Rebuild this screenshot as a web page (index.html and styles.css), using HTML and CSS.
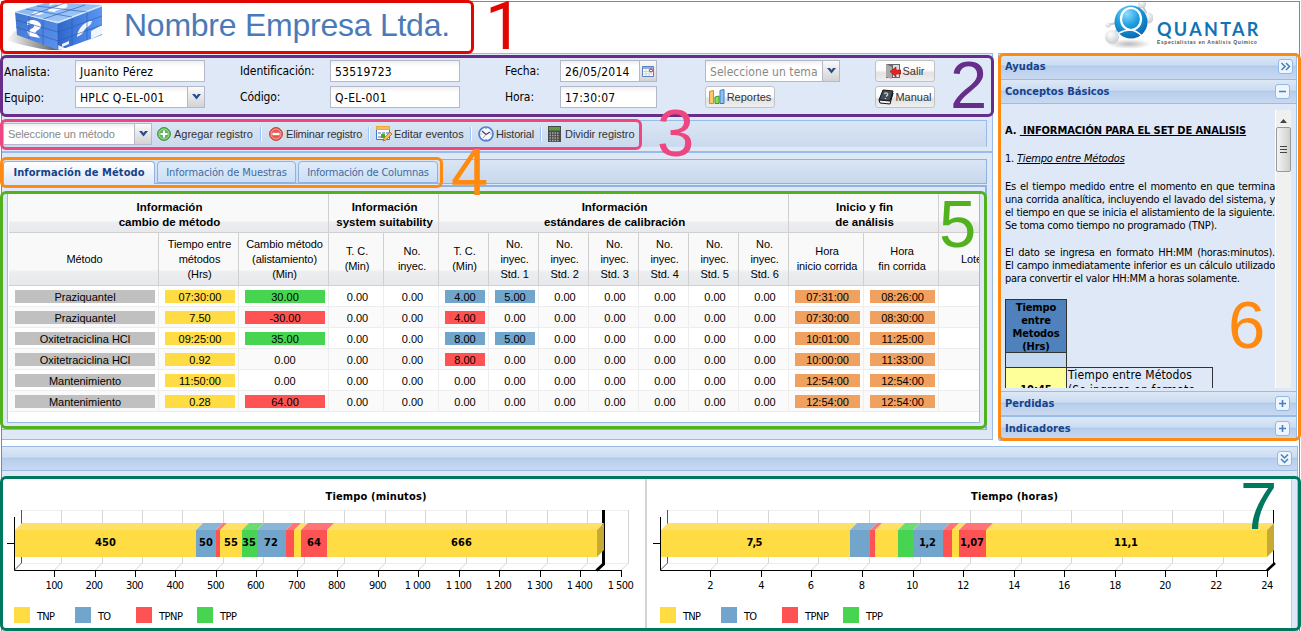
FILE: index.html
```html
<!DOCTYPE html>
<html lang="es">
<head>
<meta charset="utf-8">
<title>Quantar</title>
<link rel="stylesheet" href="styles.css">
</head>
<body>
<div class="app">
  <header class="header">
    <svg class="cube" width="98" height="50" viewBox="0 0 98 50">
      <defs>
        <linearGradient id="top" x1="0" y1="0" x2="1" y2="1"><stop offset="0" stop-color="#7fb2ee"/><stop offset="1" stop-color="#a9cdf8"/></linearGradient>
        <linearGradient id="lf" x1="0" y1="0" x2="1" y2="1"><stop offset="0" stop-color="#3f74cf"/><stop offset="1" stop-color="#5a92ec"/></linearGradient>
        <linearGradient id="rt" x1="0" y1="0" x2="1" y2="0"><stop offset="0" stop-color="#2f66cc"/><stop offset="1" stop-color="#5c97f2"/></linearGradient>
        <linearGradient id="sh" x1="0" y1="0" x2="1" y2="0"><stop offset="0" stop-color="#fff"/><stop offset="1" stop-color="#555"/></linearGradient>
      </defs>
      <path d="M0 38l9-9 45 18v1H44C28 46 12 42 0 38z" fill="url(#sh)"/>
      <path d="M9 10L42 0l54 3-44 17z" fill="url(#top)"/>
      <path d="M9 10l43 11v27L11 33z" fill="url(#lf)"/>
      <path d="M52 21L96 4v29L54 48h-2z" fill="url(#rt)"/>
      <path d="M44 1c12-2 20 1 17 4-3 3-11 2-12 5l-7-1c0-4 10-3 11-6-3-2-8 0-10 1zM30 9l9 2-6 2-8-1z" fill="#fff" opacity=".9"/>
      <path d="M21 20c3-4 14-2 14 4 0 4-6 4-6 8l-6-2c0-4 6-3 5-7-2-1-4-1-7 0zM21 29l9 2 4 5-11-2z" fill="#fff"/>
      <path d="M71 35c0-9 10-17 15-16-1 6-7 6-8 10-1 3-5 5-7 6zM85 29l11-6v9l-11 5zM56 42l7-3v3l-7 3zM52 43l9 4-9 1z" fill="#fff" opacity=".92"/>
      <path d="M10 18l42 12 44-16M10 25l42 14 44-16M23 14v23M37 18v25M66 16v28M81 10v28M20 7l46 8M31 4l50 6M23 14L59 1M37 17l42-14M52 21v27" fill="none" stroke="#2b5bb2" stroke-width=".9" opacity=".7"/>
      <path d="M9 10l43 11 44-17" fill="none" stroke="#c8e2ff"/>
    </svg>
    <h1 class="company">Nombre Empresa Ltda.</h1>
    <div class="brand">
      <svg width="60" height="50" viewBox="0 0 60 50">
        <defs>
          <radialGradient id="ball" cx=".38" cy=".25" r=".8"><stop offset="0" stop-color="#8fdcff"/><stop offset=".45" stop-color="#1d9ee0"/><stop offset="1" stop-color="#0664ad"/></radialGradient>
          <radialGradient id="grey" cx=".4" cy=".3" r=".8"><stop offset="0" stop-color="#fff"/><stop offset="1" stop-color="#c3c6ca"/></radialGradient>
          <radialGradient id="shade"><stop offset="0" stop-color="#bbb"/><stop offset="1" stop-color="#fff"/></radialGradient>
        </defs>
        <ellipse cx="36" cy="42" rx="22" ry="5" fill="url(#shade)"/>
        <path d="M18 35l14-16M15 23l16-4 18-16 7 13-16 6" fill="none" stroke="#c6c8ca" stroke-width="2"/>
        <circle cx="19" cy="35" r="7" fill="url(#grey)"/><circle cx="15" cy="23" r="2.500" fill="url(#grey)"/>
        <circle cx="49" cy="2" r="4" fill="url(#grey)"/><circle cx="55" cy="16" r="5.500" fill="url(#grey)"/>
        <circle cx="38" cy="20" r="16.500" fill="url(#ball)"/>
        <ellipse cx="38" cy="17" rx="10" ry="11" fill="none" stroke="#fff" stroke-width="2.200"/>
        <path d="M26 31c8-4 15-5 23 3" fill="none" stroke="#fff" stroke-width="1.500"/>
      </svg>
      <div class="brand-words"><b>QUANTAR</b><span>Especialistas en Análisis Químico</span></div>
    </div>
  </header>

  <div class="middle">
    <div class="left">
      <section class="panel form-panel">
        <div class="form">
          <label>Analista:</label><div class="input">Juanito Pérez</div>
          <label class="up">Identificación:</label><div class="input">53519723</div>
          <label class="up">Fecha:</label>
          <div class="input date"><span>26/05/2014</span><i class="trig"><svg width="13" height="13" viewBox="0 0 13 13"><path d="M.5 1.500h11v10H.5z" fill="#fff" stroke="#5b83bd"/><path d="M1 2h10v2H1z" fill="#8fb0dc"/><path d="M1 6.500h10M1 9h10M4 4v7M7 4v7" stroke="#cdd3da"/><circle cx="9" cy="5.500" r="1.500" fill="#fff" stroke="#a02020"/></svg></i></div>
          <div class="input theme hint"><span>Seleccione un tema</span><i class="trig"><svg width="9" height="6" viewBox="0 0 9 6"><path d="M0 0h3l1.500 2L6 0h3L4.500 5.500z" fill="#2a4d8a"/></svg></i></div>
          <button class="btn"><svg width="16" height="16" viewBox="0 0 16 16"><path d="M1 1h14v14H1z" fill="#666"/><path d="M1 1l6 3v12l-6-2z" fill="#aaa"/><path d="M8 2h6v12H8z" fill="#ddd"/><path d="M5 8.500L11 4v3h5v4h-5v3z" fill="#e02525" stroke="#a80f0f" stroke-width=".6"/></svg>Salir</button>

          <label>Equipo:</label><div class="input"><span>HPLC Q-EL-001</span><i class="trig"><svg width="9" height="6" viewBox="0 0 9 6"><path d="M0 0h3l1.500 2L6 0h3L4.500 5.500z" fill="#2a4d8a"/></svg></i></div>
          <label class="up">Código:</label><div class="input">Q-EL-001</div>
          <label class="up">Hora:</label><div class="input date">17:30:07</div>
          <button class="btn wide"><svg width="16" height="16" viewBox="0 0 16 16"><path d="M.5 2.500l4-1v13h-4z" fill="#ffc66b" stroke="#d58a25"/><path d="M6 8l4-1v7.500H6z" fill="#8be05f" stroke="#3c9a28"/><path d="M11 1.500l4-1v14h-4z" fill="#8ec2f2" stroke="#3a7ac4"/></svg>Reportes</button>
          <button class="btn"><svg width="16" height="16" viewBox="0 0 16 16"><path d="M5 1l10 1-3 10-11-1z" fill="#3d4c60" stroke="#111"/><path d="M1 11l1 3 10 1 3-11-3 8z" fill="#f4f4f4" stroke="#111"/><path d="M6.500 5c1-2 4-1 3 1L8 7.500M7.500 9v1" fill="none" stroke="#e6d29a" stroke-width="1.300"/></svg>Manual</button>
        </div>
        <div class="toolbar">
          <div class="input method hint"><span>Seleccione un método</span><i class="trig"><svg width="9" height="6" viewBox="0 0 9 6"><path d="M0 0h3l1.500 2L6 0h3L4.500 5.500z" fill="#2a4d8a"/></svg></i></div>
          <div class="tool t1"><svg width="14" height="14" viewBox="0 0 14 14"><circle cx="7" cy="7" r="6.400" fill="#5fb55a" stroke="#3b8a3b"/><circle cx="7" cy="7" r="5" fill="none" stroke="#a5d89f"/><path d="M7 3.500v7M3.500 7h7" stroke="#fff" stroke-width="2"/></svg>Agregar registro</div><i class="sep"></i>
          <div class="tool t2"><svg width="14" height="14" viewBox="0 0 14 14"><circle cx="7" cy="7" r="6.400" fill="#e8584f" stroke="#bb3a35"/><circle cx="7" cy="7" r="5" fill="none" stroke="#f5a49c"/><path d="M3.500 7h7" stroke="#fff" stroke-width="2.400"/></svg>Eliminar registro</div><i class="sep"></i>
          <div class="tool t3"><svg width="16" height="16" viewBox="0 0 16 16"><path d="M.5.500h13v13H.5z" fill="#fff" stroke="#4178c4"/><path d="M0 0h14v4H0z" fill="#f5a534"/><path d="M1 2h12" stroke="#fbd693"/><path d="M2 6h3v2H2zM6 6h3v2H6zM10 6h3v2h-3zM2 10h3v2H2z" fill="#9ab5d8"/><path d="M5 8h4v4H5z" fill="#51a51f"/><path d="M7 15l1-3 6-6 2 2-6 6z" fill="#f6bd66" stroke="#ab6b25" stroke-width=".8"/></svg>Editar eventos</div><i class="sep"></i>
          <div class="tool t4"><svg width="16" height="16" viewBox="0 0 16 16"><circle cx="8" cy="8" r="7" fill="#f5f8ff" stroke="#527fd0" stroke-width="1.700"/><path d="M4 5l4 3.500L12 6" fill="none" stroke="#39435a" stroke-width="1.200"/><path d="M8 8.500L5 12" stroke="#e88"/><path d="M8 2v1M8 13v1M2.500 8h1M12.500 8h1" stroke="#777"/></svg>Historial</div><i class="sep"></i>
          <div class="tool t5"><svg width="13" height="16" viewBox="0 0 13 16"><path d="M0 0h13v16H0z" fill="#4a4a4a"/><path d="M1 1h11v3.500H1z" fill="#5f9b43"/><path d="M1.500 7h10M1.500 9.500h10M1.500 12h10M1.500 14.500h10" stroke="#aaa" stroke-width="1.300" stroke-dasharray="1.500 1"/></svg>Dividir registro</div>
        </div>
      </section>

      <section class="panel tab-panel">
        <nav class="tabs"><a class="tab active">Información de Método</a><a class="tab mid">Información de Muestras</a><a class="tab last">Información de Columnas</a></nav>
        <div class="grid-frame"><div class="grid">
          <table>
            <colgroup><col class="c150"><col class="c80"><col class="c90"><col class="c55"><col class="c55"><col class="c50"><col class="c50"><col class="c50"><col class="c50"><col class="c50"><col class="c50"><col class="c50"><col class="c75"><col class="c75"><col class="c70"></colgroup>
            <thead>
              <tr class="groups"><th colspan="3">Información<br>cambio de método</th><th colspan="2">Información<br>system suitability</th><th colspan="7">Información<br>estándares de calibración</th><th colspan="2">Inicio y fin<br>de análisis</th><th></th></tr>
              <tr class="heads"><th>Método</th><th>Tiempo entre<br>métodos<br>(Hrs)</th><th>Cambio método<br>(alistamiento)<br>(Min)</th><th>T. C.<br>(Min)</th><th>No.<br>inyec.</th><th>T. C.<br>(Min)</th><th>No.<br>inyec.<br>Std. 1</th><th>No.<br>inyec.<br>Std. 2</th><th>No.<br>inyec.<br>Std. 3</th><th>No.<br>inyec.<br>Std. 4</th><th>No.<br>inyec.<br>Std. 5</th><th>No.<br>inyec.<br>Std. 6</th><th>Hora<br>inicio corrida</th><th>Hora<br>fin corrida</th><th class="lote">Lote</th></tr>
            </thead>
            <tbody>
              <tr><td><b class="k">Praziquantel</b></td><td><b class="y">07:30:00</b></td><td><b class="g">30.00</b></td><td>0.00</td><td>0.00</td><td><b class="b">4.00</b></td><td><b class="b">5.00</b></td><td>0.00</td><td>0.00</td><td>0.00</td><td>0.00</td><td>0.00</td><td><b class="o">07:31:00</b></td><td><b class="o">08:26:00</b></td><td></td></tr>
              <tr><td><b class="k">Praziquantel</b></td><td><b class="y">7.50</b></td><td><b class="r">-30.00</b></td><td>0.00</td><td>0.00</td><td><b class="r">4.00</b></td><td>0.00</td><td>0.00</td><td>0.00</td><td>0.00</td><td>0.00</td><td>0.00</td><td><b class="o">07:30:00</b></td><td><b class="o">08:30:00</b></td><td></td></tr>
              <tr><td><b class="k">Oxitetraciclina HCl</b></td><td><b class="y">09:25:00</b></td><td><b class="g">35.00</b></td><td>0.00</td><td>0.00</td><td><b class="b">8.00</b></td><td><b class="b">5.00</b></td><td>0.00</td><td>0.00</td><td>0.00</td><td>0.00</td><td>0.00</td><td><b class="o">10:01:00</b></td><td><b class="o">11:25:00</b></td><td></td></tr>
              <tr><td><b class="k">Oxitetraciclina HCl</b></td><td><b class="y">0.92</b></td><td>0.00</td><td>0.00</td><td>0.00</td><td><b class="r">8.00</b></td><td>0.00</td><td>0.00</td><td>0.00</td><td>0.00</td><td>0.00</td><td>0.00</td><td><b class="o">10:00:00</b></td><td><b class="o">11:33:00</b></td><td></td></tr>
              <tr><td><b class="k">Mantenimiento</b></td><td><b class="y">11:50:00</b></td><td>0.00</td><td>0.00</td><td>0.00</td><td>0.00</td><td>0.00</td><td>0.00</td><td>0.00</td><td>0.00</td><td>0.00</td><td>0.00</td><td><b class="o">12:54:00</b></td><td><b class="o">12:54:00</b></td><td></td></tr>
              <tr><td><b class="k">Mantenimiento</b></td><td><b class="y">0.28</b></td><td><b class="r">64.00</b></td><td>0.00</td><td>0.00</td><td>0.00</td><td>0.00</td><td>0.00</td><td>0.00</td><td>0.00</td><td>0.00</td><td>0.00</td><td><b class="o">12:54:00</b></td><td><b class="o">12:54:00</b></td><td></td></tr>
            </tbody>
          </table>
        </div></div>
      </section>
    </div>

    <aside class="help">
      <div class="bar first"><span>Ayudas</span><i class="sq"><svg width="11" height="9" viewBox="0 0 11 9"><path d="M1.500 1L5 4.500 1.500 8M6 1l3.500 3.500L6 8" fill="none" stroke="#4a7dba" stroke-width="1.500"/></svg></i></div>
      <div class="bar"><span>Conceptos Básicos</span><i class="sq"><svg width="9" height="9" viewBox="0 0 9 9"><path d="M1 4.500h7" stroke="#4a7dba" stroke-width="1.500"/></svg></i></div>
      <div class="help-body">
        <div class="doc">
          <p class="dh">A. <u>&nbsp;INFORMACIÓN PARA EL SET DE ANALISIS</u></p>
          <p class="ds">1. <u><em>Tiempo entre Métodos</em></u></p>
          <p class="para"><span class="ln">Es el tiempo medido entre el momento en que termina</span><span class="ln">una corrida analítica, incluyendo el lavado del sistema, y</span><span class="ln">el tiempo en que se inicia el alistamiento de la siguiente.</span><span class="ln end">Se toma como tiempo no programado (TNP).</span></p>
          <p class="para"><span class="ln">El dato se ingresa en formato HH:MM (horas:minutos).</span><span class="ln">El campo inmediatamente inferior es un cálculo utilizado</span><span class="ln end">para convertir el valor HH:MM a horas solamente.</span></p>
          <div class="ex">
            <div class="ex-col"><div class="ex-h">Tiempo<br>entre<br>Metodos<br>(Hrs)</div><div class="ex-s"></div><div class="ex-y">10:45</div></div>
            <div class="ex-note">Tiempo entre Métodos<br>(Se ingresa en formato</div>
          </div>
        </div>
        <div class="scroll"><svg width="15" height="12" viewBox="0 0 15 12"><path d="M4 8l3.500-4L11 8z" fill="#444"/></svg><div class="thumb"><i></i><i></i><i></i></div></div>
      </div>
      <div class="bar low"><span>Perdidas</span><i class="sq"><svg width="9" height="9" viewBox="0 0 9 9"><path d="M1 4.500h7M4.500 1v7" stroke="#4a7dba" stroke-width="1.500"/></svg></i></div>
      <div class="bar low"><span>Indicadores</span><i class="sq"><svg width="9" height="9" viewBox="0 0 9 9"><path d="M1 4.500h7M4.500 1v7" stroke="#4a7dba" stroke-width="1.500"/></svg></i></div>
    </aside>
  </div>

  <section class="south">
    <div class="bar south-bar"><span></span><i class="sq"><svg width="9" height="11" viewBox="0 0 9 11"><path d="M1 1.500L4.500 5 8 1.500M1 6l3.500 3.500L8 6" fill="none" stroke="#4a7dba" stroke-width="1.500"/></svg></i></div>
    <div class="charts">
      <svg class="chart c-min" width="643" height="152" viewBox="2 477 643 152">
        <path d="M21 510.500h607M21 563.500h607M14.500 517l7-7" stroke="#eee" fill="none"/>
        <path d="M61.500 510v53l-7 7M102.500 510v53l-7 7M142.500 510v53l-7 7M182.500 510v53l-7 7M223.500 510v53l-7 7M263.500 510v53l-7 7M304.500 510v53l-7 7M344.500 510v53l-7 7M385.500 510v53l-7 7M425.500 510v53l-7 7M466.500 510v53l-7 7M506.500 510v53l-7 7M547.500 510v53l-7 7M587.500 510v53l-7 7M628.500 510v53l-7 7" stroke="#d6d6d6" fill="none"/>
        <path d="M21.500 510v53l-7 7" stroke="#555" fill="none"/>
        <path d="M603.500 510v54l-7 6.500" stroke="#000" stroke-width="3" fill="none"/>
        <path d="M14.500 517v53.500H622M7 543.500h7M54.500 570v7M95.500 570v7M135.500 570v7M175.500 570v7M216.500 570v7M256.500 570v7M297.500 570v7M337.500 570v7M378.500 570v7M418.500 570v7M459.500 570v7M499.500 570v7M540.500 570v7M580.500 570v7M621.500 570v7" stroke="#000" fill="none"/>
        <g class="y"><path d="M15 530h181v27H15zM220 530h22v27h-22zM294 530h7v27h-7zM327 530h270v27H327z"/><path class="lid" d="M15 530l7-7h181l-7 7zM220 530l7-7h22l-7 7zM294 530l7-7h7l-7 7zM327 530l7-7h270l-7 7z"/></g>
        <g class="b"><path d="M196 530h20v27h-20zM257 530h29v27h-29z"/><path class="lid" d="M196 530l7-7h20l-7 7zM257 530l7-7h29l-7 7z"/></g>
        <g class="r"><path d="M216 530h4v27h-4zM286 530h8v27h-8zM301 530h26v27h-26z"/><path class="lid" d="M216 530l7-7h4l-7 7zM286 530l7-7h8l-7 7zM301 530l7-7h26l-7 7z"/></g>
        <g class="g"><path d="M242 530h15v27h-15z"/><path class="lid" d="M242 530l7-7h15l-7 7z"/></g>
        <path d="M597 530l7-7v27l-7 7z" fill="#c7ab31"/>
        <g class="ct"><text x="376" y="500" textLength="101">Tiempo (minutos)</text><text x="105.500" y="546" textLength="21">450</text><text x="206" y="546" textLength="14">50</text><text x="231" y="546" textLength="14">55</text><text x="249" y="546" textLength="14">35</text><text x="271" y="546" textLength="14">72</text><text x="314" y="546" textLength="14">64</text><text x="461.500" y="546" textLength="21">666</text></g>
        <g class="ax"><text x="54" y="589">100</text><text x="94" y="589">200</text><text x="134.500" y="589">300</text><text x="175" y="589">400</text><text x="215.500" y="589">500</text><text x="255.500" y="589">600</text><text x="296.500" y="589">700</text><text x="336.500" y="589">800</text><text x="377.500" y="589">900</text><text x="417.500" y="589">1 000</text><text x="458.500" y="589">1 100</text><text x="498.500" y="589">1 200</text><text x="539.500" y="589">1 300</text><text x="579.500" y="589">1 400</text><text x="620.500" y="589">1 500</text></g>
        <path class="y" d="M14 607h16v16H14z"/><path class="b" d="M75 607h16v16H75z"/><path class="r" d="M136 607h16v16h-16z"/><path class="g" d="M197 607h16v16h-16z"/>
        <g class="lg"><text x="37" y="620" textLength="18">TNP</text><text x="98" y="620" textLength="13">TO</text><text x="159" y="620" textLength="24">TPNP</text><text x="220" y="620" textLength="17">TPP</text></g>
      </svg>
      <svg class="chart c-hrs" width="644" height="152" viewBox="647 477 644 152">
        <path d="M667 510.500h607M667 563.500h607M660.500 517l7-7" stroke="#eee" fill="none"/>
        <path d="M717.500 510v53l-7 7M768.500 510v53l-7 7M818.500 510v53l-7 7M869.500 510v53l-7 7M920.500 510v53l-7 7M970.500 510v53l-7 7M1021.500 510v53l-7 7M1071.500 510v53l-7 7M1122.500 510v53l-7 7M1172.500 510v53l-7 7M1223.500 510v53l-7 7" stroke="#d6d6d6" fill="none"/>
        <path d="M667.500 510v53l-7 7" stroke="#555" fill="none"/>
        <path d="M1273.500 510v53" stroke="#000"/><path d="M1275 563l-8 7.500" stroke="#000" stroke-width="2.500"/>
        <path d="M660.500 517v53.500H1267M653 543.500h7M710.500 570v7M761.500 570v7M811.500 570v7M862.500 570v7M913.500 570v7M963.500 570v7M1014.500 570v7M1064.500 570v7M1115.500 570v7M1165.500 570v7M1216.500 570v7M1267.500 570v7" stroke="#000" fill="none"/>
        <g class="y"><path d="M661 530h189v27H661zM875 530h23v27h-23zM952 530h7v27h-7zM986 530h281v27H986z"/><path class="lid" d="M661 530l7-7h189l-7 7zM875 530l7-7h23l-7 7zM952 530l7-7h7l-7 7zM986 530l7-7h281l-7 7z"/></g>
        <g class="b"><path d="M850 530h20v27h-20zM913 530h30v27h-30z"/><path class="lid" d="M850 530l7-7h20l-7 7zM913 530l7-7h30l-7 7z"/></g>
        <g class="r"><path d="M870 530h5v27h-5zM943 530h9v27h-9zM959 530h27v27h-27z"/><path class="lid" d="M870 530l7-7h5l-7 7zM943 530l7-7h9l-7 7zM959 530l7-7h27l-7 7z"/></g>
        <g class="g"><path d="M898 530h15v27h-15z"/><path class="lid" d="M898 530l7-7h15l-7 7z"/></g>
        <path d="M1267 530l7-7v27l-7 7z" fill="#c7ab31"/>
        <g class="ct"><text x="1014.500" y="500" textLength="87">Tiempo (horas)</text><text x="754.500" y="546" textLength="16">7,5</text><text x="927.500" y="546" textLength="17">1,2</text><text x="972" y="546" textLength="24">1,07</text><text x="1126" y="546" textLength="24">11,1</text></g>
        <g class="ax"><text x="710" y="589">2</text><text x="761" y="589">4</text><text x="810.500" y="589">6</text><text x="861.500" y="589">8</text><text x="912" y="589">10</text><text x="963" y="589">12</text><text x="1014" y="589">14</text><text x="1064" y="589">16</text><text x="1115" y="589">18</text><text x="1165" y="589">20</text><text x="1216" y="589">22</text><text x="1267" y="589">24</text></g>
        <path class="y" d="M660 607h16v16h-16z"/><path class="b" d="M721 607h16v16h-16z"/><path class="r" d="M782 607h16v16h-16z"/><path class="g" d="M843 607h16v16h-16z"/>
        <g class="lg"><text x="683" y="620" textLength="18">TNP</text><text x="744" y="620" textLength="13">TO</text><text x="805" y="620" textLength="24">TPNP</text><text x="866" y="620" textLength="17">TPP</text></g>
      </svg>
    </div>
  </section>
</div>

<!-- numbered callouts over the screen -->
<div class="call n1"></div><div class="call n2"></div><div class="call n3"></div><div class="call n4"></div><div class="call n5"></div><div class="call n6"></div><div class="call n7"></div>
<div class="num d1">1</div><div class="num d2">2</div><div class="num d3">3</div><div class="num d4">4</div><div class="num d5">5</div><div class="num d6">6</div><div class="num d7">7</div>
</body>
</html>
```
FILE: styles.css
```css
* { box-sizing: border-box; }
body { margin: 0; width: 1301px; height: 631px; overflow: hidden; position: relative; background: #fff; color: #000; font: 11px/13px "DejaVu Sans Condensed", "DejaVu Sans", sans-serif; }
i { font-style: normal; }
.app { margin: 1px 1px 0; height: 630px; border: 1px solid #5b8fd0; border-bottom: 0; display: flex; flex-direction: column; }
.header { height: 51px; display: flex; align-items: flex-start; padding-left: 4px; flex: none; }
.cube { flex: none; }
.company { margin: 5px 0 0 20px; font: 32px/36px "Liberation Sans", Arial, sans-serif; letter-spacing: -.25px; color: #4b7ab8; white-space: nowrap; }
.brand { margin-left: auto; display: flex; width: 206px; }
.brand-words { display: flex; flex-direction: column; color: #1173b5; margin-left: 4px; padding-top: 17px; white-space: nowrap; }
.brand-words b { font: bold 18px/20px Lato, sans-serif; letter-spacing: 2.3px; }
.brand-words span { font: bold 5px/6px "Liberation Sans", sans-serif; letter-spacing: .6px; color: #555; }

.middle { display: flex; gap: 5px; height: 387px; flex: none; }
.left { width: 991px; display: flex; flex-direction: column; }
.panel { border: 1px solid #99bbe8; border-left: 0; background: #dfe8f6; }
.form-panel { height: 99px; border-bottom-color: #99bbe8; padding-right: 5px; }
.form { display: grid; grid-template-columns: 71px 165px 90px 175px 55px 145px 170px 62px; grid-template-rows: 22px 22px; row-gap: 4px; padding: 6px 0 0 2px; height: 66px; font-size: 12px; }
.form label { line-height: 24px; letter-spacing: -.1px; white-space: nowrap; }
.form label.up { line-height: 22px; }
.input { width: 130px; height: 22px; border: 1px solid #b5b8c8; background: linear-gradient(#eee, #fff 5px); padding-left: 4px; line-height: 22px; font-size: 12px; letter-spacing: .25px; display: flex; justify-content: space-between; white-space: nowrap; }
.date { width: 97px; }
.theme { width: 135px; letter-spacing: .05px; }
.hint { color: #888; }
.trig { width: 17px; flex: none; border-left: 1px solid #b5b8c8; background: linear-gradient(#fafafa, #d3d3d6); display: flex; align-items: center; justify-content: center; }
.btn { width: 60px; height: 22px; padding: 0; border: 1px solid #c2c2c2; border-radius: 3px; background: linear-gradient(#fdfdfd 0 45%, #e2e2e2 60%, #efefef); display: flex; align-items: center; justify-content: center; gap: 1px; font: 11px "Liberation Sans", sans-serif; color: #333; white-space: nowrap; }
.btn.wide { width: 70px; gap: 2px; }
.toolbar { height: 27px; border: 1px solid #99bbe8; border-left: 0; border-bottom-color: #cddcf0; background: linear-gradient(#d9e6f4, #cbdaee); display: flex; align-items: center; font: 11px "Liberation Sans", sans-serif; color: #333; }
.method { width: 149px; margin-left: 1px; font-size: 11px; line-height: 20px; letter-spacing: -.1px; }
.tool { display: flex; align-items: center; white-space: nowrap; gap: 3px; letter-spacing: -.05px; }
.t1 { width: 103px; margin-left: 5px; gap: 3px; letter-spacing: 0; }
.sep { width: 2px; height: 14px; border-left: 1px solid #98c8ff; border-right: 1px solid #fff; }
.t2 { width: 99px; margin-left: 7px; letter-spacing: -.2px; }
.t3 { width: 94px; margin-left: 6px; gap: 2px; }
.t4 { width: 62px; margin-left: 6px; gap: 2px; letter-spacing: -.2px; }
.t5 { margin-left: 6px; gap: 4px; }

.tab-panel { height: 288px; padding: 6px 5px 0 0; display: flex; flex-direction: column; }
.tabs { height: 25px; border: 1px solid #8db2e3; border-left: 0; background: linear-gradient(#d9e5f4, #c8d8ec); display: flex; align-items: flex-start; padding: 1px 0 0 1px; flex: none; }
.tab { height: 22px; border: 1px solid #8db2e3; border-radius: 4px 4px 0 0; background: linear-gradient(#dfebfa, #cddff6); color: #416aa3; text-align: center; line-height: 21px; white-space: nowrap; margin-right: 2px; }
.tab.active { width: 152px; height: 23px; border-bottom: 0; background: linear-gradient(#fff, #dfe8f6); color: #15428b; font-weight: bold; letter-spacing: .08px; }
.tab.mid { width: 139px; letter-spacing: -.1px; } .tab.last { width: 140px; letter-spacing: -.22px; }
.grid-frame { border: 2px solid #8db2e3; border-left: 0; border-bottom-width: 1px; margin-top: 1px; height: 245px; padding: 6px 5px 0; background: #dfe8f6; }
.grid { width: 973px; height: 230px; border: 1px solid #99bbe8; background: #fff; overflow: hidden; padding-top: 0; }
table { width: 975px; table-layout: fixed; border-collapse: separate; border-spacing: 0; font: 11px/15px "Liberation Sans", sans-serif; text-align: center; margin-left: 1px; }
.c150 { width: 150px; } .c80 { width: 80px; } .c90 { width: 90px; } .c55 { width: 55px; } .c50 { width: 50px; } .c75 { width: 75px; } .c70 { width: 70px; }
th { padding: 0 0 0 2px; border-right: 1px solid #d0d0d0; border-bottom: 1px solid #d0d0d0; background: linear-gradient(#f9f9f9 0 70%, #ecedef 75%, #e8e9ec); font-weight: normal; white-space: nowrap; letter-spacing: -.08px; }
.groups th { height: 39px; font-weight: bold; padding-top: 3px; font-size: 11.500px; letter-spacing: 0; }
.heads th { height: 53px; }
th.lote { text-align: left; padding-left: 22px; }
td { height: 21px; padding: 4px 3px 0 6px; border-right: 1px solid #ededed; border-bottom: 1px solid #ededed; line-height: 14px; vertical-align: top; }
tbody tr:nth-child(even) td { background: #fafafa; }
td b { display: block; font-weight: normal; line-height: 14px; height: 13px; }
td .k { background: #c0c0c0; } td .y { background: #ffdb44; } td .g { background: #46d451; } td .r { background: #ff5353; } td .b { background: #71a5cc; } td .o { background: #f0a15f; }

.help { width: 299px; border: 1px solid #99bbe8; background: #dfe8f6; display: flex; flex-direction: column; }
.bar { height: 24px; flex: none; border-bottom: 1px solid #99bbe8; background: linear-gradient(#dce8f6, #cbdcf1 45%, #a9c6ea 48%, #b9cfec 55%, #c8d9f1); display: flex; align-items: center; justify-content: space-between; padding: 0 6px; color: #15428b; font-weight: bold; letter-spacing: .05px; }
.bar.first { height: 26px; padding-right: 3px; }
.sq { width: 15px; height: 15px; border: 1px solid #95b8e4; border-radius: 3px; background: #edf5ff; display: flex; align-items: center; justify-content: center; }
.help-body { height: 284px; margin: 0 5px 3px 6px; padding-top: 6px; display: flex; flex: none; overflow: hidden; }
.doc { width: 270px; flex: none; }
.doc p { margin: 0; white-space: nowrap; }
.doc .dh { padding-top: 14px; font-weight: bold; letter-spacing: -.1px; }
.doc .ds { padding: 15px 0; letter-spacing: -.2px; }
.doc .para { letter-spacing: -.25px; padding-bottom: 14px; }
.ln { display: block; text-align: justify; text-align-last: justify; white-space: normal; }
.ln.end { text-align-last: left; }
.ex { display: flex; align-items: flex-end; height: 105px; width: 208px; }
.ex-col { width: 62px; height: 105px; border: 1px solid #333; text-align: center; font-weight: bold; flex: none; }
.ex-h { height: 53px; background: #4f81bd; border-bottom: 1px solid #333; letter-spacing: -.1px; padding-top: 1px; }
.ex-s { height: 15px; background: #c5d9f1; border-bottom: 1px solid #333; }
.ex-y { height: 35px; background: #ffff99; padding-top: 15px; }
.ex-note { height: 37px; width: 146px; border: 1px solid #333; border-left: 0; font-size: 12px; letter-spacing: .15px; white-space: nowrap; overflow: hidden; padding-left: 1px; line-height: 15px; }
.scroll { width: 16px; background: #f0f0f0; border-left: 1px solid #fff; padding-top: 5px; flex: none; }
.scroll svg { display: block; }
.thumb { width: 15px; height: 45px; border: 1px solid #999; border-radius: 2px; background: linear-gradient(90deg, #f4f4f4, #cfcfcf); display: flex; flex-direction: column; align-items: center; justify-content: center; gap: 2px; }
.thumb i { width: 7px; height: 1px; background: #444; }
.bar.low { height: 25px; border-top: 1px solid #99bbe8; }

.south { margin-top: 6px; width: 1296px; border-right: 1px solid #99bbe8; background: #dfe8f6; height: 190px; }
.south-bar { height: 25px; border-top: 1px solid #99bbe8; padding-right: 5px; }
.charts { margin-top: 6px; display: flex; width: 1290px; height: 152px; background: #fff; border-right: 1px solid #ccc; }
.chart { flex: none; box-sizing: content-box; font: 11px "DejaVu Sans Condensed", "DejaVu Sans", sans-serif; }
.c-min { border-right: 0; }
.c-hrs { border-left: 2px solid #d3d3d3; }
.chart .y { fill: #ffdb44; } .chart .b { fill: #71a5cc; } .chart .r { fill: #ff5353; } .chart .g { fill: #46d451; }
.chart .y .lid { fill: #ffe169; } .chart .b .lid { fill: #8bb5d6; } .chart .r .lid { fill: #ff7575; } .chart .g .lid { fill: #6bdc73; }
.ct { font-weight: bold; text-anchor: middle; }
.ax { text-anchor: middle; letter-spacing: -.6px; }

.call { position: absolute; border: 3px solid; border-radius: 6px; }
.n1 { left: 0; top: 0; width: 474px; height: 54px; color: #e10600; }
.n2 { left: 0; top: 55px; width: 994px; height: 62px; color: #662d8a; }
.n3 { left: 0; top: 119px; width: 642px; height: 31px; color: #ee4680; }
.n4 { left: 0; top: 157px; width: 443px; height: 31px; color: #ff8a12; }
.n5 { left: 0; top: 191px; width: 987px; height: 238px; color: #52b21d; }
.n6 { left: 998px; top: 53px; width: 303px; height: 388px; color: #ff8a12; }
.n7 { left: 0; top: 476px; width: 1301px; height: 155px; color: #00775f; }
.num { position: absolute; font: 67px/68px "Liberation Sans", Arial, sans-serif; }
.d1 { left: 485px; top: -8px; color: #e10600; font-family: Roboto, sans-serif; }
.d2 { left: 950px; top: 51px; color: #662d8a; }
.d3 { left: 657px; top: 99px; color: #ee4680; }
.d4 { left: 451px; top: 138px; color: #ff8a12; }
.d5 { left: 939px; top: 190px; color: #52b21d; }
.d6 { left: 1228px; top: 291px; color: #ff8a12; }
.d7 { left: 1240px; top: 472px; color: #00775f; }
```
